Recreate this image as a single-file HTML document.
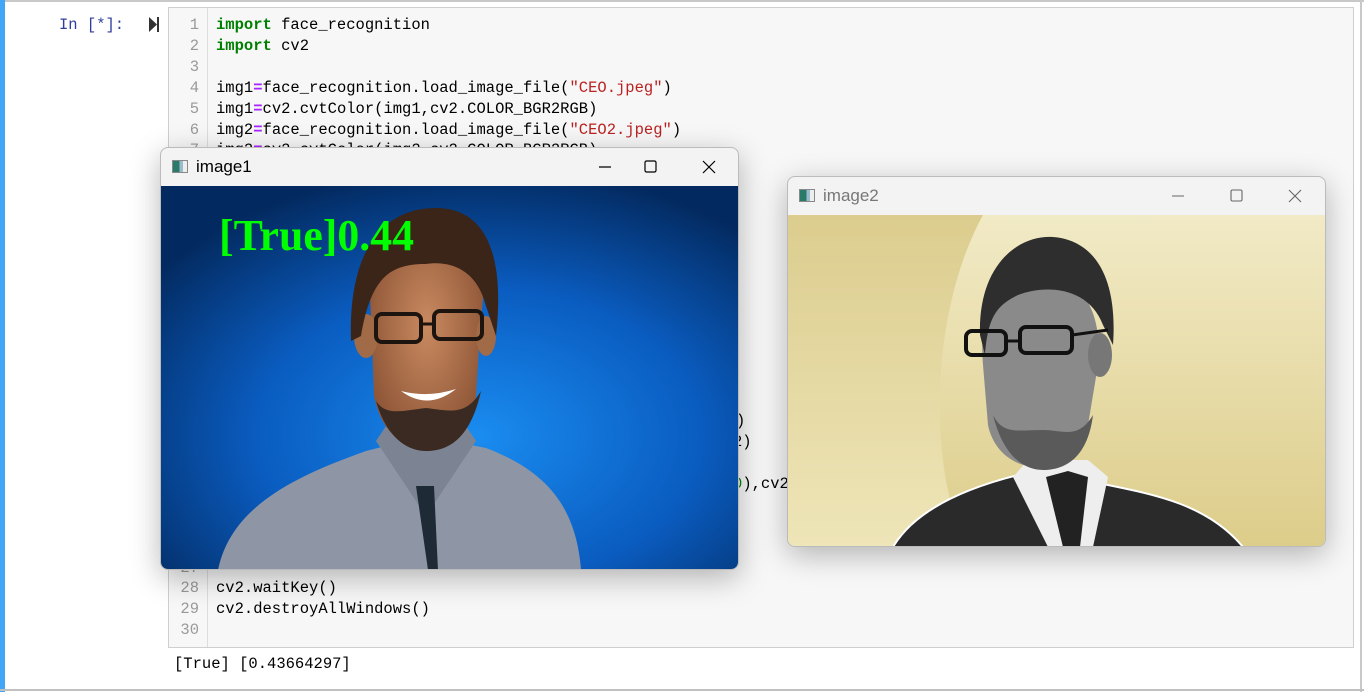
<!DOCTYPE html>
<html><head><meta charset="utf-8"><style>
*{margin:0;padding:0;box-sizing:border-box}
body{width:1364px;height:692px;overflow:hidden;background:#fff;position:relative;font-family:"Liberation Mono",monospace}
.bar{position:absolute;left:0;top:0;width:5px;height:692px;background:#42a5f5}
.topb{position:absolute;left:0;top:0;width:1364px;height:2px;background:#c8c8c8}
.botb{position:absolute;left:0;top:689px;width:1364px;height:2px;background:#c0c0c0}
.rb{position:absolute;left:1360px;top:0;width:2px;height:692px;background:#c8c8c8}
.prompt{position:absolute;left:59px;top:16px;color:#303f9f;font-size:15.5px}
.run{position:absolute;left:149px;top:17px;width:10px;height:15px}
.cell{position:absolute;left:168px;top:7px;width:1186px;height:641px;background:#f7f7f7;border:1px solid #cfcfcf}
.gut{position:absolute;left:0;top:0;width:39px;height:100%;border-right:1px solid #ddd;background:#f7f7f7}
.ln{position:absolute;width:30px;text-align:right;color:#999;font-size:15.5px;left:0}
.cl{position:absolute;left:47px;font-size:15.5px;color:#000;white-space:pre}
.k{color:#008000;font-weight:bold}.o{color:#aa22ff;font-weight:bold}.s{color:#ba2121}.n{color:#080}
.out{position:absolute;left:174px;top:655px;font-size:15.5px;color:#000;white-space:pre}
.win{position:absolute;background:#f3f3f3;border:1px solid #bbb;border-radius:8px;overflow:hidden;box-shadow:0 8px 30px rgba(0,0,0,.28)}
.tt{position:absolute;left:35px;font-family:"Liberation Sans",sans-serif;font-size:17px}
.ic{position:absolute;left:11px;width:16px;height:13px;border:1px solid #888;background:linear-gradient(90deg,#2a7a6a 0 45%,#9bc 45% 70%,#eee 70%)}
</style></head><body>
<div class="topb"></div><div class="bar"></div><div class="rb"></div><div class="botb"></div>
<div class="prompt">In [*]:</div>
<svg class="run" viewBox="0 0 10 15"><path d="M0 0L8 7.5L0 15Z" fill="#333"/><rect x="8" y="0" width="2" height="15" fill="#333"/></svg>
<div class="cell">
<div class="gut"></div>
<div class="ln" style="top:8px">1</div><div class="ln" style="top:29px">2</div><div class="ln" style="top:50px">3</div><div class="ln" style="top:71px">4</div><div class="ln" style="top:92px">5</div><div class="ln" style="top:113px">6</div><div class="ln" style="top:133px">7</div>
<div class="ln" style="top:551px">27</div><div class="ln" style="top:571px">28</div><div class="ln" style="top:592px">29</div><div class="ln" style="top:613px">30</div>
<div class="cl" style="top:8px"><span class="k">import</span> face_recognition</div>
<div class="cl" style="top:29px"><span class="k">import</span> cv2</div>
<div class="cl" style="top:71px">img1<span class="o">=</span>face_recognition.load_image_file(<span class="s">"CEO.jpeg"</span>)</div>
<div class="cl" style="top:92px">img1<span class="o">=</span>cv2.cvtColor(img1,cv2.COLOR_BGR2RGB)</div>
<div class="cl" style="top:113px">img2<span class="o">=</span>face_recognition.load_image_file(<span class="s">"CEO2.jpeg"</span>)</div>
<div class="cl" style="top:133px">img2<span class="o">=</span>cv2.cvtColor(img2,cv2.COLOR_BGR2RGB)</div>
<div class="cl" style="top:404px;left:567px">)</div>
<div class="cl" style="top:425px;left:564px">2)</div>
<div class="cl" style="top:467px;left:564px"><span class="n">0</span>),cv2</div>
<div class="cl" style="top:571px">cv2.waitKey()</div>
<div class="cl" style="top:592px">cv2.destroyAllWindows()</div>
</div>
<div class="out">[True] [0.43664297]</div>

<div class="win" style="left:160px;top:147px;width:579px;height:423px">
<div class="ic" style="top:12px"></div><div class="tt" style="top:9px;color:#000">image1</div>
<svg style="position:absolute;left:428px;top:10px" width="140" height="18"><path d="M10 9H22" stroke="#000" stroke-width="1.2"/><rect x="56" y="3" width="11" height="11" rx="1.5" fill="none" stroke="#000" stroke-width="1.2"/><path d="M114 3L126 15M126 3L114 15" stroke="#000" stroke-width="1.2"/></svg>
<svg style="position:absolute;left:0;top:38px" width="578" height="384" viewBox="0 0 578 384">
<defs><radialGradient id="bg1" cx="0.55" cy="0.65" r="0.7"><stop offset="0" stop-color="#1a8cf0"/><stop offset=".55" stop-color="#0a5cc0"/><stop offset="1" stop-color="#032a60"/></radialGradient>
<radialGradient id="sk" cx=".5" cy=".45" r=".6"><stop offset="0" stop-color="#c98a60"/><stop offset="1" stop-color="#8a5234"/></radialGradient></defs>
<rect width="578" height="384" fill="url(#bg1)"/>
<g transform="translate(15,0)">
<path d="M42 384C55 320 120 290 190 265L250 250L310 262C370 285 400 320 405 384Z" fill="#8e96a6"/>
<path d="M200 255L250 330L300 255L290 240H210Z" fill="#7c8494"/>
<path d="M240 300L252 384H262L258 300Z" fill="#1e2b36"/>
<path d="M195 130C190 70 215 40 250 40C290 40 315 70 305 130L300 210C290 250 270 262 250 262C225 262 205 245 198 210Z" fill="url(#sk)"/>
<ellipse cx="190" cy="150" rx="12" ry="22" fill="#a06b46"/><ellipse cx="310" cy="150" rx="10" ry="20" fill="#a06b46"/>
<path d="M175 155C172 60 210 22 260 22C305 22 330 60 320 150L310 120C300 80 270 75 250 78C215 78 195 90 185 150Z" fill="#3a2518"/>
<path d="M200 215C210 250 230 265 250 265C275 265 295 250 305 205C290 230 275 225 250 222C225 225 210 230 200 215Z" fill="#3a2a22"/>
<path d="M225 205Q252 225 280 203Q252 212 225 205Z" fill="#fff"/>
<rect x="200" y="128" width="45" height="28" rx="6" fill="none" stroke="#1d1410" stroke-width="4"/><rect x="258" y="125" width="48" height="28" rx="6" fill="none" stroke="#1d1410" stroke-width="4"/><path d="M245 138H258" stroke="#1d1410" stroke-width="3"/>
</g>
<text x="58" y="64" font-family="Liberation Serif,serif" font-size="44" font-weight="bold" fill="#00ff00" textLength="195" lengthAdjust="spacingAndGlyphs">[True]0.44</text>
</svg>
</div>

<div class="win" style="left:787px;top:176px;width:539px;height:371px">
<div class="ic" style="top:12px"></div><div class="tt" style="top:9px;color:#777">image2</div>
<svg style="position:absolute;left:372px;top:10px" width="160" height="18"><path d="M12 9H24" stroke="#666" stroke-width="1.1"/><rect x="71" y="3" width="11" height="11" rx="1.5" fill="none" stroke="#666" stroke-width="1.1"/><path d="M129 3L141 15M141 3L129 15" stroke="#666" stroke-width="1.1"/></svg>
<svg style="position:absolute;left:0;top:38px" width="538" height="332" viewBox="0 0 538 332">
<defs><linearGradient id="bg2" x1="0" y1="0" x2="0" y2="1"><stop offset="0" stop-color="#dccd8e"/><stop offset="1" stop-color="#eee5b8"/></linearGradient>
<linearGradient id="bg3" x1="0" y1="0" x2="0" y2="1"><stop offset="0" stop-color="#f1eac6"/><stop offset="1" stop-color="#ddcd8a"/></linearGradient></defs>
<rect width="538" height="332" fill="url(#bg2)"/>
<path d="M195 0H538V332H180C140 260 140 100 195 0Z" fill="url(#bg3)"/>
<path d="M105 332C130 290 190 270 230 260L260 250L310 268C370 280 420 290 455 332Z" fill="#2a2a2a" stroke="#fff" stroke-width="2"/>
<path d="M225 262L260 332H305L320 262L300 245H240Z" fill="#eee"/>
<path d="M258 262L275 332H292L300 262L280 256Z" fill="#222"/>
<path d="M195 150C190 90 210 60 250 60C290 60 315 90 310 150L300 210C290 245 270 252 250 252C225 252 205 235 200 210Z" fill="#8a8a8a"/>
<ellipse cx="312" cy="140" rx="12" ry="22" fill="#777"/>
<path d="M192 120C190 50 230 20 265 22C305 25 330 60 325 130L315 110C300 70 255 70 230 80C210 90 200 100 197 140Z" fill="#2e2e2e"/>
<path d="M205 200C215 240 235 255 255 255C280 255 300 240 305 200C290 225 275 215 255 215C230 215 215 220 205 200Z" fill="#5a5a5a"/>
<rect x="178" y="116" width="40" height="24" rx="6" fill="none" stroke="#111" stroke-width="4"/><rect x="232" y="112" width="52" height="26" rx="6" fill="none" stroke="#111" stroke-width="4"/><path d="M218 126H232M284 120L320 115" stroke="#111" stroke-width="3"/>
</svg>
</div>
</body></html>
